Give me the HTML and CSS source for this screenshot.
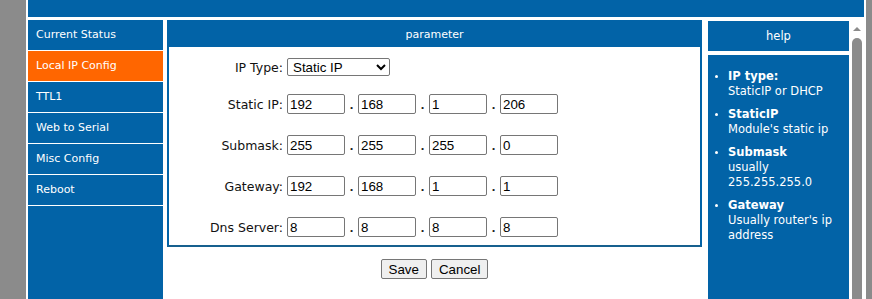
FILE: index.html
```html
<!DOCTYPE html>
<html>
<head>
<meta charset="utf-8">
<link rel="stylesheet" href="styles.css">
</head>
<body>
<div class="page">
  <div class="edge-left"></div>
  <div class="main">
    <div class="topbar"></div>
    <div class="row">
      <nav class="nav">
        <a class="nav-item">Current Status</a>
        <a class="nav-item active">Local IP Config</a>
        <a class="nav-item">TTL1</a>
        <a class="nav-item">Web to Serial</a>
        <a class="nav-item">Misc Config</a>
        <a class="nav-item">Reboot</a>
      </nav>
      <div class="content">
        <div class="panel">
          <div class="panel-head">parameter</div>
          <div class="panel-body">
            <div class="form-row first">
              <label class="lbl">IP Type:</label>
              <select class="sel"><option>Static IP</option><option>DHCP</option></select>
            </div>
            <div class="form-row">
              <label class="lbl">Static IP:</label>
              <div class="ip"><input class="oct" value="192"><span class="dot">.</span><input class="oct" value="168"><span class="dot">.</span><input class="oct" value="1"><span class="dot">.</span><input class="oct" value="206"></div>
            </div>
            <div class="form-row">
              <label class="lbl">Submask:</label>
              <div class="ip"><input class="oct" value="255"><span class="dot">.</span><input class="oct" value="255"><span class="dot">.</span><input class="oct" value="255"><span class="dot">.</span><input class="oct" value="0"></div>
            </div>
            <div class="form-row">
              <label class="lbl">Gateway:</label>
              <div class="ip"><input class="oct" value="192"><span class="dot">.</span><input class="oct" value="168"><span class="dot">.</span><input class="oct" value="1"><span class="dot">.</span><input class="oct" value="1"></div>
            </div>
            <div class="form-row">
              <label class="lbl">Dns Server:</label>
              <div class="ip"><input class="oct" value="8"><span class="dot">.</span><input class="oct" value="8"><span class="dot">.</span><input class="oct" value="8"><span class="dot">.</span><input class="oct" value="8"></div>
            </div>
          </div>
        </div>
        <div class="actions">
          <button class="btn">Save</button>
          <button class="btn">Cancel</button>
        </div>
      </div>
      <aside class="help">
        <div class="help-head">help</div>
        <div class="help-body">
          <ul class="help-list">
            <li><b>IP type:</b><br>StaticIP or DHCP</li>
            <li><b>StaticIP</b><br>Module's static ip</li>
            <li><b>Submask</b><br>usually<br>255.255.255.0</li>
            <li><b>Gateway</b><br>Usually router's ip address</li>
          </ul>
        </div>
      </aside>
      <div class="scroll">
        <div class="scroll-arrow"></div>
        <div class="scroll-thumb"></div>
      </div>
    </div>
  </div>
  <div class="edge-gap"></div>
  <div class="edge-right"></div>
</div>
</body>
</html>
```
FILE: styles.css
```css
html, body {
  margin: 0;
  padding: 0;
  background: #ffffff;
  height: 299px;
  overflow: hidden;
}
.page {
  display: flex;
  height: 299px;
  font-family: "DejaVu Sans", Verdana, sans-serif;
}
.edge-left {
  width: 26px;
  background: #8b8b8b;
  margin-right: 2px;
  flex: none;
}
.edge-gap {
  width: 2px;
  flex: none;
}
.edge-right {
  width: 6px;
  background: #8b8b8b;
  flex: none;
}
.main {
  width: 836px;
  flex: none;
  display: flex;
  flex-direction: column;
}
.topbar {
  height: 17px;
  background: #0263a7;
  margin-bottom: 3px;
}
.row {
  flex: 1;
  display: flex;
  align-items: stretch;
}
.nav {
  width: 135px;
  background: #0263a7;
  display: flex;
  flex-direction: column;
  flex: none;
}
.nav-item {
  height: 30px;
  border-bottom: 1px solid #ffffff;
  color: #ffffff;
  font-size: 11px;
  line-height: 30px;
  padding-left: 8px;
  text-decoration: none;
}
.nav-item.active {
  background: #ff6600;
}
.content {
  width: 535px;
  margin-left: 4px;
  flex: none;
  display: flex;
  flex-direction: column;
}
.panel {
  border: 2px solid #0263a7;
  border-bottom-color: #16608e;
}
.panel-head {
  height: 25px;
  background: #0263a7;
  color: #ffffff;
  font-size: 11px;
  line-height: 26px;
  text-align: center;
  margin: -2px -2px 0;
  padding-top: 2px;
}
.panel-body {
  padding: 11px 0 8px;
  display: flex;
  flex-direction: column;
  gap: 21px;
}
.form-row {
  display: flex;
  align-items: center;
}
.form-row.first {
  margin-bottom: -3px;
}
.lbl {
  width: 114px;
  margin-right: 4px;
  text-align: right;
  font-size: 12.5px;
  color: #111111;
}
.sel {
  width: 103px;
  height: 18px;
  font-family: "Liberation Sans", Arial, sans-serif;
  font-size: 13.33px;
  color: #000;
  border: 1px solid #767676;
  border-radius: 2px;
  background: #fff;
  padding: 0 0 0 1px;
}
.ip {
  display: flex;
  align-items: center;
}
.oct {
  width: 58px;
  height: 20px;
  box-sizing: border-box;
  border: 1px solid #767676;
  border-radius: 2px;
  padding: 0 2px;
  font-family: "Liberation Sans", Arial, sans-serif;
  font-size: 13.33px;
  color: #000;
  outline: none;
}
.dot {
  width: 13px;
  text-align: center;
  font-family: "Liberation Sans", Arial, sans-serif;
  font-size: 13px;
  font-weight: bold;
  color: #222;
}
.actions {
  display: flex;
  justify-content: center;
  gap: 4px;
  margin-top: 12px;
}
.btn {
  height: 20px;
  padding: 0 7px;
  font-family: "Liberation Sans", Arial, sans-serif;
  font-size: 13.33px;
  color: #000;
  background: #efefef;
  border: 1px solid #767676;
  border-radius: 2px;
}
.help {
  width: 141px;
  margin-left: 6px;
  flex: none;
  display: flex;
  flex-direction: column;
}
.help-head {
  height: 30px;
  background: #0263a7;
  color: #ffffff;
  font-size: 11.5px;
  line-height: 30px;
  text-align: center;
  margin-top: 1px;
  margin-bottom: 4px;
}
.help-body {
  flex: 1;
  background: #0263a7;
  color: #ffffff;
  font-size: 11.5px;
  line-height: 15px;
  padding-top: 14px;
}
.help-list {
  margin: 0;
  padding: 0 0 0 20px;
}
.help-list li {
  margin-bottom: 8px;
}
.help-list li::marker {
  font-size: 10px;
}
.scroll {
  width: 10px;
  margin-left: 3px;
  flex: none;
  display: flex;
  flex-direction: column;
  align-items: center;
}
.scroll-arrow {
  width: 0;
  height: 0;
  margin-top: 7px;
  border-left: 4px solid transparent;
  border-right: 4px solid transparent;
  border-bottom: 4px solid #8b8b8b;
}
.scroll-thumb {
  width: 10px;
  flex: 1;
  margin-top: 7px;
  background: #8b8b8b;
  border-radius: 5px 5px 0 0;
}
```
